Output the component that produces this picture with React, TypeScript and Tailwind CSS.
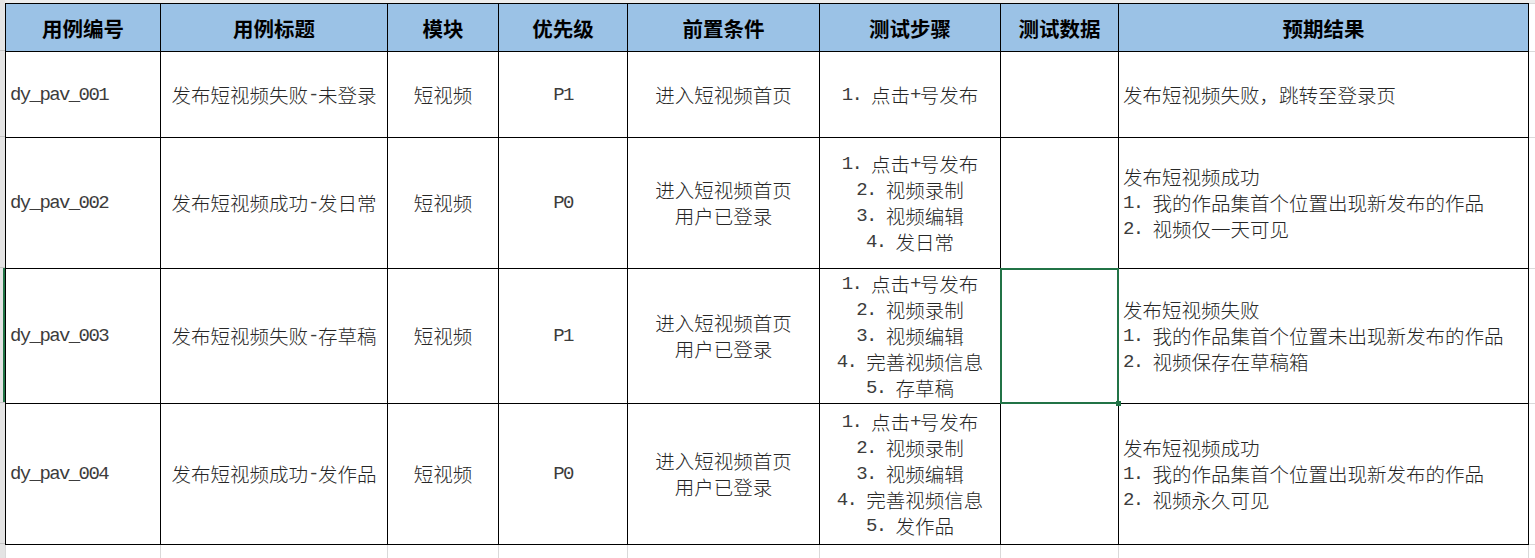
import React from "react";

const colW = [
  "w-[155px]",
  "w-[227px]",
  "w-[111px]",
  "w-[129px]",
  "w-[192px]",
  "w-[181px]",
  "w-[118px]",
  "w-[410px]",
  "w-[7px]",
];

function Line({ s }: { s: string }) {
  const parts = s.split(/([\x00-\x7F]+)/).filter((p) => p.length > 0);
  return (
    <div className="flex items-center h-[26px] whitespace-pre">
      {parts.map((p, i) =>
        /^[\x00-\x7F]+$/.test(p) ? (
          <span
            key={i}
            className="font-['Liberation_Mono',monospace] font-normal text-[#3c3c3c] text-[19px] leading-[26px] tracking-[-1.6px] whitespace-pre"
          >
            {p}
          </span>
        ) : (
          <span key={i} className="leading-[26px]">
            {p}
          </span>
        )
      )}
    </div>
  );
}

function Lines({ lines, align = "center" }: { lines: string[]; align?: "center" | "left" }) {
  return (
    <div className={align === "center" ? "flex flex-col items-center" : "flex flex-col items-start"}>
      {lines.map((l, i) => (
        <Line key={i} s={l} />
      ))}
    </div>
  );
}

type Row = {
  h: string;
  id: string;
  title: string;
  mod: string;
  pri: string;
  pre: string[];
  steps: string[];
  exp: string[];
  selected?: boolean;
};

const rows: Row[] = [
  {
    h: "h-[86px]",
    id: "dy_pav_001",
    title: "发布短视频失败-未登录",
    mod: "短视频",
    pri: "P1",
    pre: ["进入短视频首页"],
    steps: ["1. 点击+号发布"],
    exp: ["发布短视频失败，跳转至登录页"],
  },
  {
    h: "h-[131px]",
    id: "dy_pav_002",
    title: "发布短视频成功-发日常",
    mod: "短视频",
    pri: "P0",
    pre: ["进入短视频首页", "用户已登录"],
    steps: ["1. 点击+号发布", "2. 视频录制", "3. 视频编辑", "4. 发日常"],
    exp: ["发布短视频成功", "1. 我的作品集首个位置出现新发布的作品", "2. 视频仅一天可见"],
  },
  {
    h: "h-[135px]",
    id: "dy_pav_003",
    title: "发布短视频失败-存草稿",
    mod: "短视频",
    pri: "P1",
    pre: ["进入短视频首页", "用户已登录"],
    steps: ["1. 点击+号发布", "2. 视频录制", "3. 视频编辑", "4. 完善视频信息", "5. 存草稿"],
    exp: ["发布短视频失败", "1. 我的作品集首个位置未出现新发布的作品", "2. 视频保存在草稿箱"],
    selected: true,
  },
  {
    h: "h-[141px]",
    id: "dy_pav_004",
    title: "发布短视频成功-发作品",
    mod: "短视频",
    pri: "P0",
    pre: ["进入短视频首页", "用户已登录"],
    steps: ["1. 点击+号发布", "2. 视频录制", "3. 视频编辑", "4. 完善视频信息", "5. 发作品"],
    exp: ["发布短视频成功", "1. 我的作品集首个位置出现新发布的作品", "2. 视频永久可见"],
  },
];

const headers = ["用例编号", "用例标题", "模块", "优先级", "前置条件", "测试步骤", "测试数据", "预期结果"];

export default function App() {
  const td = "border border-black p-0 align-middle";
  return (
    <div className="w-[1535px] h-[558px] overflow-hidden bg-white flex font-['Noto_Sans_CJK_SC',sans-serif] text-[19.5px] leading-[26px] text-[#262626] font-light">
      {/* row header gutter */}
      <div className="w-[5px] shrink-0 flex flex-col bg-[#e4e4e4]">
        <div className="h-[51px] border-b border-[#c6c6c6]" />
        <div className="h-[86px] border-b border-[#c6c6c6]" />
        <div className="h-[131px] border-b border-[#c6c6c6]" />
        <div className="h-[135px] border-b border-[#c6c6c6] flex justify-end">
          <div className="w-[2px] h-full bg-[#217346]" />
        </div>
        <div className="h-[141px] border-b border-[#c6c6c6]" />
        <div className="flex-1" />
      </div>
      <div className="flex-1 flex flex-col">
        <div className="h-[3px] bg-[#ededed] shrink-0" />
        <table className="table-fixed border-collapse w-[1530px]">
          <colgroup>
            {colW.map((c, i) => (
              <col key={i} className={c} />
            ))}
          </colgroup>
          <tbody>
            <tr className="h-[48px]">
              {headers.map((h) => (
                <td
                  key={h}
                  className={`${td} bg-[#9bc2e6] text-center font-bold text-black text-[20.5px]`}
                >
                  {h}
                </td>
              ))}
              <td className="border border-[#d9d9d9] border-l-black p-0" />
            </tr>
            {rows.map((r) => (
              <tr key={r.id} className={r.h}>
                <td className={`${td} pl-[4px]`}>
                  <Lines lines={[r.id]} align="left" />
                </td>
                <td className={td}>
                  <Lines lines={[r.title]} />
                </td>
                <td className={td}>
                  <Lines lines={[r.mod]} />
                </td>
                <td className={td}>
                  <Lines lines={[r.pri]} />
                </td>
                <td className={td}>
                  <Lines lines={r.pre} />
                </td>
                <td className={td}>
                  <Lines lines={r.steps} />
                </td>
                <td className={`${td} relative`}>
                  {r.selected && (
                    <>
                      <div className="absolute -inset-[1px] border-2 border-[#217346]" />
                      <div className="absolute -right-[3px] -bottom-[3px] w-[5px] h-[5px] bg-[#217346]" />
                    </>
                  )}
                </td>
                <td className={`${td} pl-[4px]`}>
                  <Lines lines={r.exp} align="left" />
                </td>
                <td className="border border-[#d9d9d9] p-0" />
              </tr>
            ))}
            <tr className="h-[30px]">
              {colW.map((_, i) => (
                <td key={i} className="border border-[#d9d9d9] p-0" />
              ))}
            </tr>
          </tbody>
        </table>
      </div>
    </div>
  );
}
